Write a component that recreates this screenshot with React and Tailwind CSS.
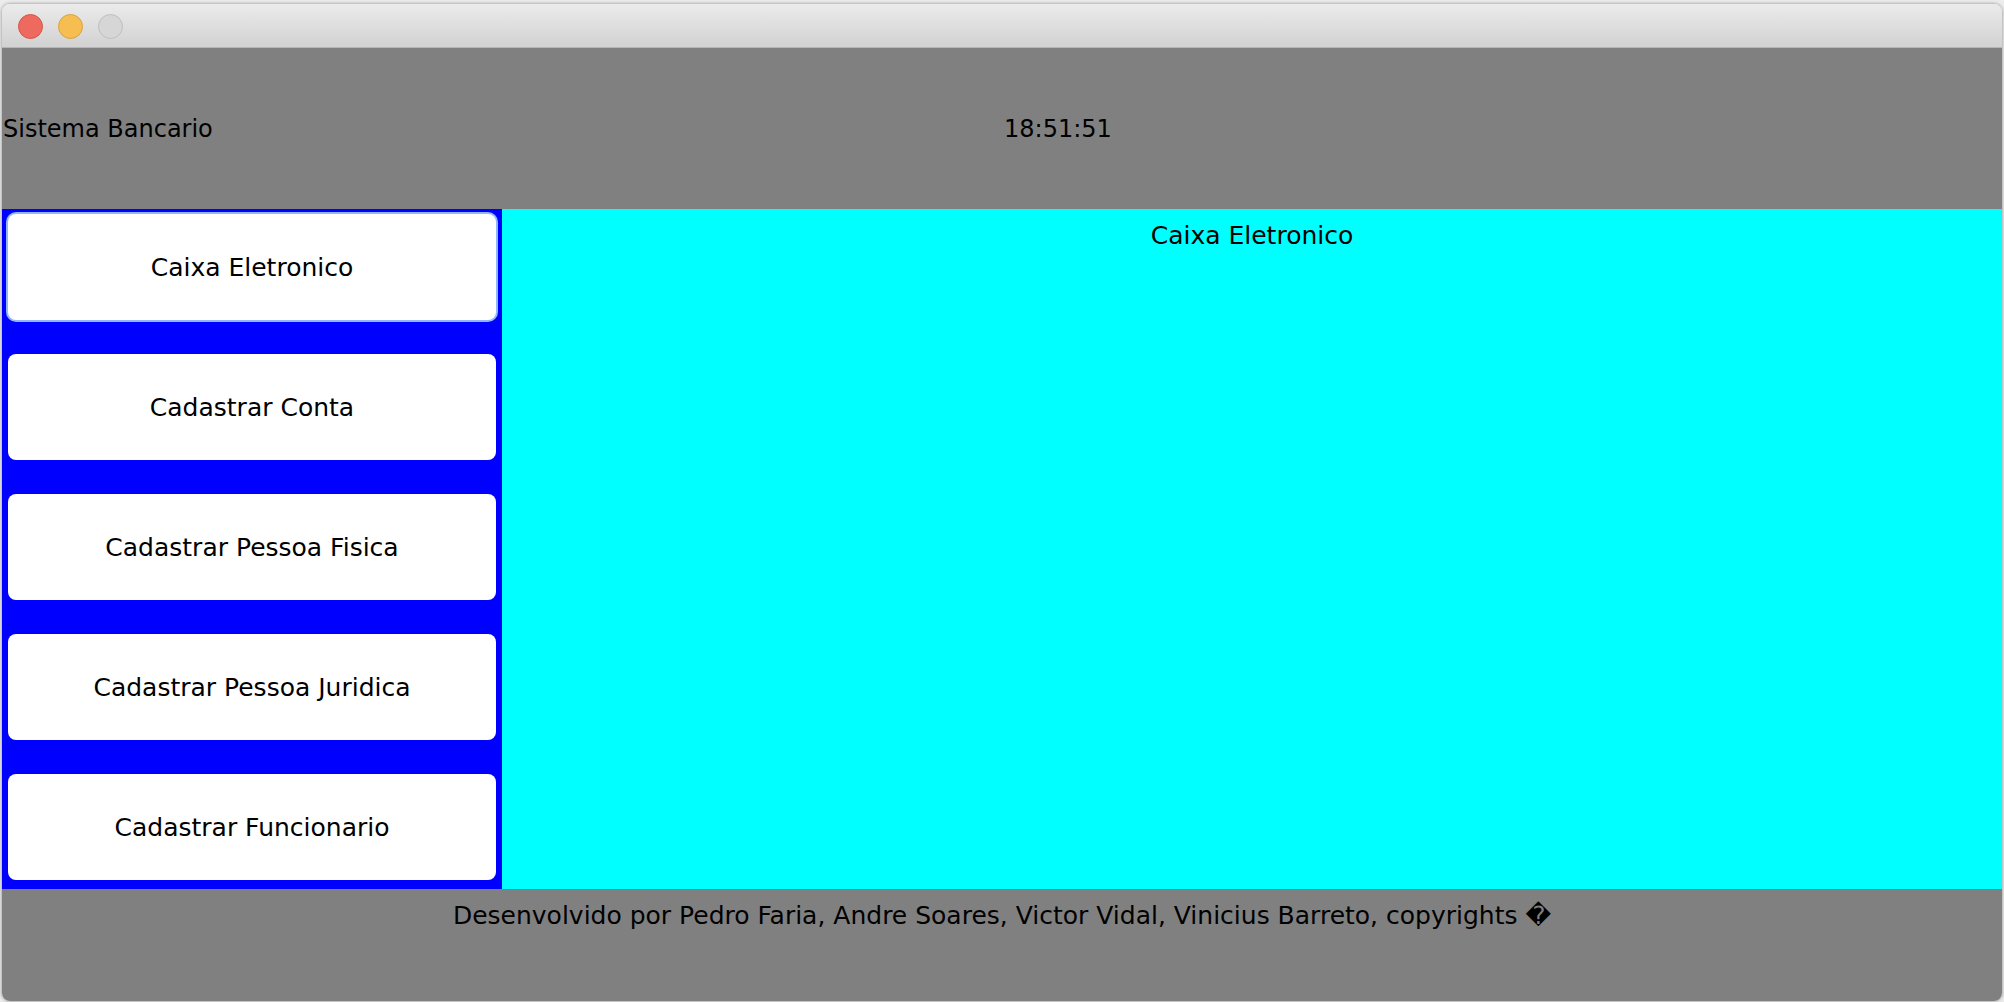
import React from 'react';

// ── Janela "Sistema Bancario" ─────────────────────────────────

const MENU = [
  'Caixa Eletronico',
  'Cadastrar Conta',
  'Cadastrar Pessoa Fisica',
  'Cadastrar Pessoa Juridica',
  'Cadastrar Funcionario',
];

const font = { fontFamily: '"DejaVu Sans", "Liberation Sans", sans-serif' };

const TrafficLights = () => (
  <div className="flex items-center gap-[15px] pl-[16px] pt-[10px]">
    <span className="w-[25px] h-[25px] rounded-full bg-[#ee6a5f] border border-[#d4554a]" />
    <span className="w-[25px] h-[25px] rounded-full bg-[#f6be50] border border-[#d9a23f]" />
    <span className="w-[25px] h-[25px] rounded-full bg-[#d6d6d6] border border-[#bfbfbf]" />
  </div>
);

export default function App() {
  return (
    <div className="w-[2004px] h-[1002px] bg-[#ececec] overflow-hidden pt-[3px] pl-[1px]" style={font}>
      <div className="w-[2002px] h-[999px] flex flex-col rounded-[9px] overflow-hidden border border-[#c4c4c4] shadow-[0_0_3px_rgba(0,0,0,0.25)]">

        {/* Barra de titulo */}
        <div className="h-[44px] shrink-0 bg-gradient-to-b from-[#ebebeb] to-[#d2d2d2] border-b border-[#b5b5b5]">
          <TrafficLights />
        </div>

        {/* Cabecalho */}
        <div className="h-[161px] shrink-0 bg-[#808080] grid grid-cols-2 items-center text-[24px] leading-[29px] text-black pt-[2px]">
          <div className="pl-[1px]">Sistema Bancario</div>
          <div className="pl-[2px]">18:51:51</div>
        </div>

        {/* Corpo */}
        <div className="h-[680px] shrink-0 flex">
          <div className="w-[500px] shrink-0 bg-[#0000ff] flex flex-col gap-[34px] px-[6px] pt-[5px]">
            {MENU.map((label, i) => (
              <button
                key={label}
                className={
                  'h-[106px] shrink-0 bg-white rounded-[8px] text-[25px] leading-[29px] text-black ' +
                  (i === 0 ? 'shadow-[0_0_0_2px_#8fb6ff]' : '')
                }
                style={font}
              >
                {label}
              </button>
            ))}
          </div>
          <div className="flex-1 bg-[#00ffff] text-center text-[25px] leading-[29px] text-black pt-[12px]">
            Caixa Eletronico
          </div>
        </div>

        {/* Rodape */}
        <div className="flex-1 bg-[#808080] text-center text-[25px] leading-[29px] text-black pt-[12px]">
          Desenvolvido por Pedro Faria, Andre Soares, Victor Vidal, Vinicius Barreto, copyrights {'\uFFFD'}
        </div>
      </div>
    </div>
  );
}
